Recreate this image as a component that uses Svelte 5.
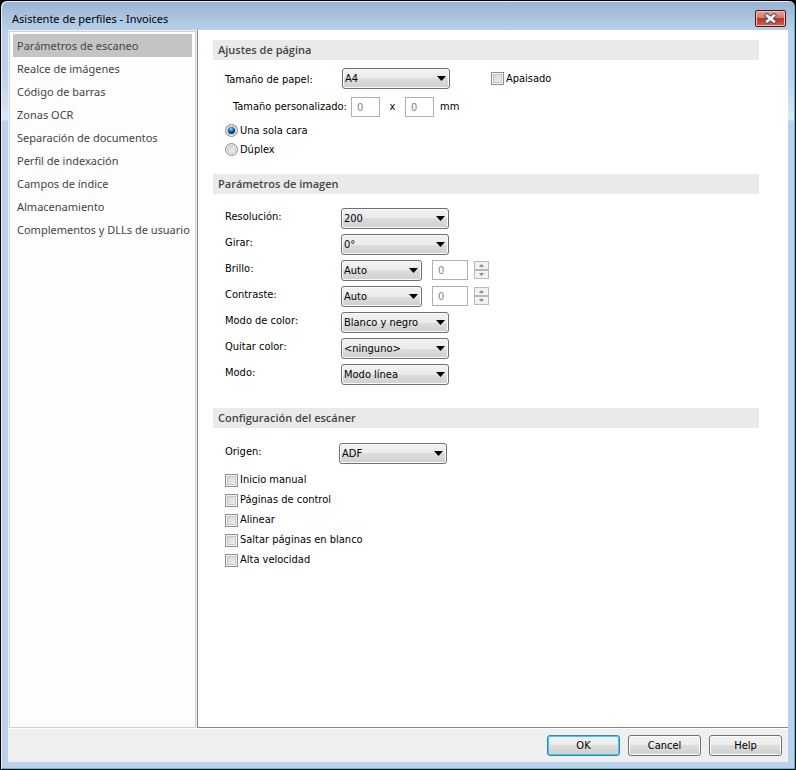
<script lang="ts">
  const pages = [
    "Parámetros de escaneo",
    "Realce de imágenes",
    "Código de barras",
    "Zonas OCR",
    "Separación de documentos",
    "Perfil de indexación",
    "Campos de índice",
    "Almacenamiento",
    "Complementos y DLLs de usuario",
  ];

  const imageSettings = [
    { id: "resolution", label: "Resolución:", options: ["200", "300", "600"] },
    { id: "rotate", label: "Girar:", options: ["0°", "90°", "180°", "270°"] },
    { id: "brightness", label: "Brillo:", options: ["Auto", "Manual"], spin: true },
    { id: "contrast", label: "Contraste:", options: ["Auto", "Manual"], spin: true },
    { id: "colormode", label: "Modo de color:", options: ["Blanco y negro", "Color"] },
    { id: "dropcolor", label: "Quitar color:", options: ["<ninguno>"] },
    { id: "mode", label: "Modo:", options: ["Modo línea"] },
  ];

  let selected = $state(0);
  let sides = $state("simple");
  let scanner = $state([
    { label: "Inicio manual", checked: false },
    { label: "Páginas de control", checked: false },
    { label: "Alinear", checked: false },
    { label: "Saltar páginas en blanco", checked: false },
    { label: "Alta velocidad", checked: false },
  ]);
</script>

{#snippet dropdown(id: string, options: string[], small = false)}
  <select {id} class:small>
    {#each options as option}
      <option>{option}</option>
    {/each}
  </select>
{/snippet}

<div class="window">
  <header class="titlebar">
    <h1>Asistente de perfiles - Invoices</h1>
    <button class="close" aria-label="Cerrar">
      <svg width="13" height="11" viewBox="0 0 13 11">
        <path d="M3 2.500l7 6M10 2.500l-7 6" stroke="#4d5064" stroke-width="4.500" stroke-linecap="square" />
        <path d="M3 2.500l7 6M10 2.500l-7 6" stroke="#f6f6f6" stroke-width="2.500" stroke-linecap="square" />
      </svg>
    </button>
  </header>

  <div class="client">
    <div class="body">
      <nav>
        {#each pages as page, i}
          <button class="page" class:active={i === selected} onclick={() => (selected = i)}>
            {page}
          </button>
        {/each}
      </nav>

      <main>
        <section>
          <h2>Ajustes de página</h2>
          <div class="fields paper">
            <div class="row paper-size">
              <label for="paper">Tamaño de papel:</label>
              {@render dropdown("paper", ["A4", "A5", "Letter"])}
              <label class="check landscape"><input type="checkbox" />Apaisado</label>
            </div>
            <div class="row custom-size">
              <label for="width">Tamaño personalizado:</label>
              <input id="width" class="number" type="text" value="0" disabled />
              <span class="times">x</span>
              <input class="number" type="text" value="0" aria-label="Alto" disabled />
              <span>mm</span>
            </div>
            <label class="check radio">
              <input type="radio" value="simple" bind:group={sides} />Una sola cara
            </label>
            <label class="check radio">
              <input type="radio" value="duplex" bind:group={sides} />Dúplex
            </label>
          </div>
        </section>

        <section>
          <h2>Parámetros de imagen</h2>
          <div class="fields image">
            {#each imageSettings as setting}
              <div class="row setting">
                <label for={setting.id}>{setting.label}</label>
                {@render dropdown(setting.id, setting.options, setting.spin)}
                {#if setting.spin}
                  <input class="number wide" type="text" value="0" aria-label={setting.label} disabled />
                  <div class="spinner">
                    <button aria-label="Aumentar" disabled>
                      <svg width="5" height="3" viewBox="0 0 5 3"><path d="M0 3h5L2.500 0z" /></svg>
                    </button>
                    <button aria-label="Reducir" disabled>
                      <svg width="5" height="3" viewBox="0 0 5 3"><path d="M0 0h5L2.500 3z" /></svg>
                    </button>
                  </div>
                {/if}
              </div>
            {/each}
          </div>
        </section>

        <section>
          <h2>Configuración del escáner</h2>
          <div class="fields scanner">
            <div class="row setting source">
              <label for="source">Origen:</label>
              {@render dropdown("source", ["ADF", "Flatbed"])}
            </div>
            {#each scanner as option}
              <label class="check">
                <input type="checkbox" bind:checked={option.checked} />{option.label}
              </label>
            {/each}
          </div>
        </section>
      </main>
    </div>

    <footer>
      <button class="action default">OK</button>
      <button class="action">Cancel</button>
      <button class="action">Help</button>
    </footer>
  </div>
</div>

<style>
  :global(body) {
    margin: 0;
    background: #000;
  }

  .window,
  .window * {
    box-sizing: border-box;
  }

  .window {
    display: flex;
    flex-direction: column;
    min-height: 100vh;
    padding: 0 7px 7px;
    border: 1px solid #000;
    border-radius: 7px 7px 0 0;
    background: linear-gradient(#98b4d2, #b9d1ea 30px, #b9d1ea 70px, #dce8f6 119px, #b9d1ea 120px);
    box-shadow:
      inset 1px 1px #e8f1fa,
      inset -1px -1px #28cbe4;
    color: #000;
    font: 11px/14px "DejaVu Sans Condensed", "DejaVu Sans", sans-serif;
    font-stretch: condensed;
  }

  button,
  input,
  select {
    margin: 0;
    padding: 0;
    color: inherit;
    font: inherit;
  }

  .titlebar {
    display: flex;
    align-items: center;
    justify-content: space-between;
    height: 29px;
    padding: 6px 2px 0 4px;
  }

  h1 {
    margin: 0;
    font: 11px/16px "Noto Sans", sans-serif;
  }

  .close {
    display: flex;
    align-items: center;
    justify-content: center;
    width: 31px;
    height: 17px;
    border: 1px solid #4a1420;
    border-radius: 2px;
    background: linear-gradient(#e8a196, #d9786a 48%, #b8371f 50%, #d5604e);
    box-shadow: inset 0 0 0 1px #eebdb5;
  }

  .client {
    display: flex;
    flex: 1;
    flex-direction: column;
    background: #efefef;
  }

  .body {
    display: flex;
    flex: 1;
    border-bottom: 1px solid #fff;
  }

  nav {
    display: flex;
    flex-direction: column;
    width: 187px;
    margin: 1px 1px 0;
    padding: 2px 3px;
    border: 1px solid #d0d0d0;
    background: #fdfdfd;
  }

  .page {
    height: 23px;
    padding: 0 4px;
    border: 0;
    background: none;
    color: #444;
    font: 11px/16px "Noto Sans", sans-serif;
    text-align: left;
    white-space: nowrap;
  }

  .page.active {
    background: #c4c4c4;
  }

  main {
    flex: 1;
    padding: 10px 29px 10px 15px;
    border: solid #868690;
    border-width: 0 0 1px 1px;
    background: #fff;
  }

  h2 {
    margin: 0;
    padding: 0 5px;
    background: #eaeaea;
    color: #444;
    font: 600 11px/20px "Open Sans", sans-serif;
  }

  .fields {
    display: flex;
    flex-direction: column;
    padding-left: 12px;
  }

  .paper {
    padding-top: 8px;
    padding-bottom: 15px;
  }

  .row {
    display: flex;
    align-items: center;
  }

  .paper-size > label:first-child {
    width: 117px;
    padding-top: 3px;
  }

  .landscape {
    margin-left: 41px;
  }

  .custom-size {
    margin: 8px 0 4px;
    padding-left: 8px;
  }

  .custom-size label {
    width: 118px;
    white-space: nowrap;
  }

  .times {
    width: 25px;
    text-align: center;
  }

  .custom-size span:last-child {
    margin-left: 6px;
  }

  .number {
    width: 29px;
    height: 20px;
    padding: 0 5px;
    border: 1px solid #afafaf;
    background: #fff;
    color: #838383;
  }

  .wide {
    width: 36px;
    margin-left: 10px;
  }

  select {
    width: 108px;
    height: 21px;
    padding-left: 2px;
    border: 1px solid #707070;
    border-radius: 3px;
    appearance: none;
    background:
      url("data:image/svg+xml,%3Csvg xmlns='http://www.w3.org/2000/svg' width='9' height='5'%3E%3Cpath d='M0 0h9L4.500 5z'/%3E%3C/svg%3E")
        no-repeat right 3px center,
      linear-gradient(#f2f2f2, #ebebeb 50%, #dddddd 50%, #cfcfcf);
    box-shadow: inset 0 0 0 1px #fafafa;
  }

  select.small {
    width: 81px;
  }

  .image {
    gap: 5px;
    padding-top: 14px;
    padding-bottom: 23px;
  }

  .setting {
    align-items: flex-start;
  }

  .setting label {
    width: 116px;
    padding-top: 2px;
  }

  .spinner {
    display: flex;
    flex-direction: column;
    margin: 1px 0 0 6px;
  }

  .spinner button {
    display: flex;
    align-items: center;
    justify-content: center;
    width: 15px;
    height: 9px;
    border: 1px solid #b8b8b8;
    background: #f2f2f2;
  }

  .spinner path {
    fill: #8a8a8a;
  }

  .scanner {
    padding-top: 15px;
  }

  .source {
    margin-bottom: 6px;
  }

  .source label {
    width: 114px;
  }

  .check {
    display: flex;
    align-items: center;
    gap: 2px;
    height: 20px;
  }

  .radio {
    height: 19px;
  }

  .check input {
    width: 13px;
    height: 13px;
    border: 1px solid #8e8f8f;
    appearance: none;
    background: linear-gradient(135deg, #cbcfd5, #f6f6f6);
    box-shadow:
      inset 0 0 0 1px #f4f4f4,
      inset 0 0 0 2px #c3c7cc;
  }

  .check input[type="checkbox"]:checked {
    background: #31347c;
  }

  .check input[type="radio"] {
    border-radius: 50%;
  }

  .check input[type="radio"]:checked {
    background: radial-gradient(circle at 5px 4px, #8fe0f8, #1c86b8 2px, #0b3b61 4px);
    box-shadow:
      inset 0 0 0 1px #f4f4f4,
      inset 0 0 0 2px #b9c3cc;
  }

  footer {
    display: flex;
    justify-content: flex-end;
    gap: 8px;
    padding: 6px;
  }

  .action {
    width: 73px;
    height: 21px;
    border: 1px solid #707070;
    border-radius: 3px;
    background: linear-gradient(#f2f2f2, #ebebeb 50%, #dddddd 50%, #cfcfcf);
    box-shadow: inset 0 0 0 1px #fafafa;
  }

  .default {
    border-color: #3c7fb1;
    box-shadow: inset 0 0 0 1px #2fd0f5;
  }
</style>
